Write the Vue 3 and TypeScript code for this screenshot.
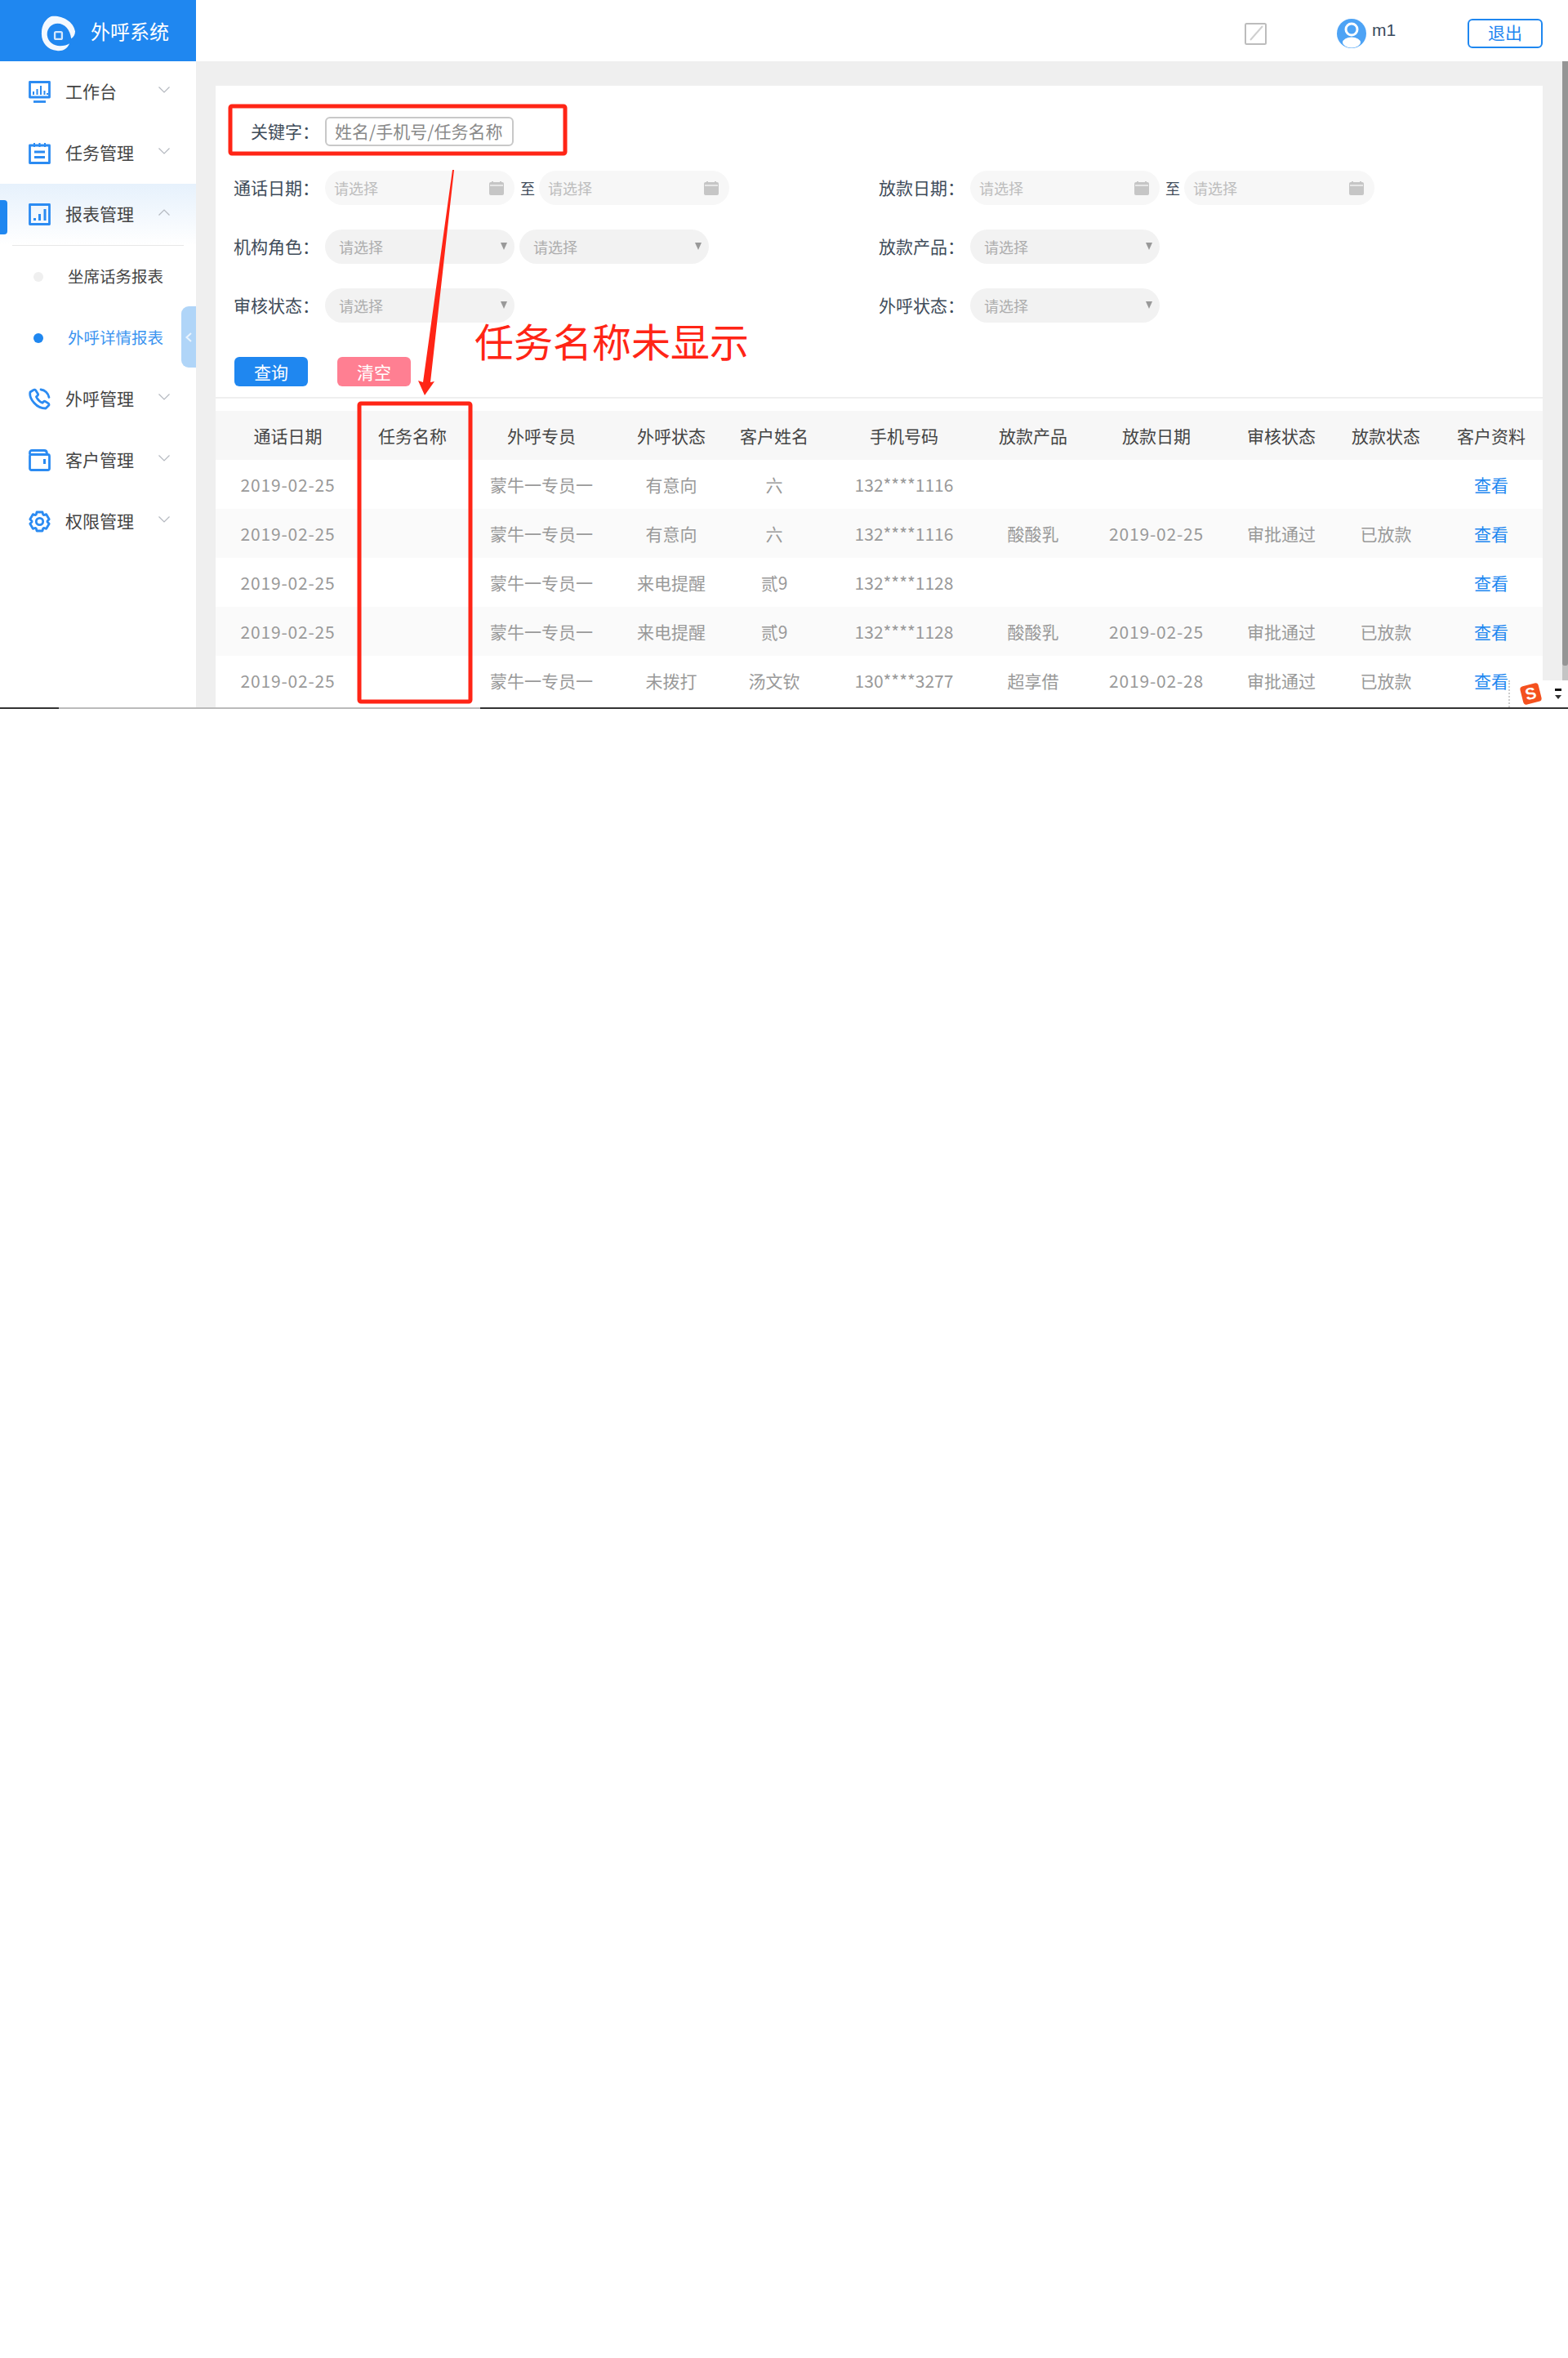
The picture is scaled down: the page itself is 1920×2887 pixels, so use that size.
<template>
  <div class="page">
    <div class="window">
      <aside class="sidebar">
        <div class="brand">
          <svg class="brand-logo" viewBox="0 0 44 46" fill="none">
            <path d="M13 1C24-1 41 6 43 20c0 4-2 7-5 9-1-11-8-19-17-19-8 0-14 7-13 15 1 8 8 13 16 13 5 0 9-1 12-3-3 7-9 10-16 9C8 43 0 33 1 21 1 12 6 4 13 1z" fill="#fff" opacity=".95" />
            <rect x="17.500" y="20.500" width="9" height="9" rx="1.500" stroke="#d5e8fc" stroke-width="2.400" />
          </svg>
          <span>外呼系统</span>
        </div>
        <nav class="menu">
          <template v-for="item in menu" :key="item.name">
            <div class="menu-item" :class="{ active: item.open }">
              <svg class="menu-icon" viewBox="0 0 27 27" fill="none" stroke="#2b8bf2" stroke-width="2.800">
                <template v-if="item.icon === 'desk'">
                  <path d="M1.500 1.500h24v18.500h-24z" stroke-linejoin="round" />
                  <path d="M6 17v-4M10.500 17v-7M15 17V6M19.500 17v-5M23 17v-2" stroke-width="2" />
                  <path d="M6 25.500h15" />
                </template>
                <template v-else-if="item.icon === 'task'">
                  <path d="M1.500 4h24v21.500h-24z" stroke-linejoin="round" />
                  <path d="M7 1v5M13.500 1v5M20 1v5" stroke-width="2" />
                  <path d="M7 12h13M7 18.500h13" stroke-width="2.800" />
                </template>
                <template v-else-if="item.icon === 'report'">
                  <path d="M1.500 1.500h24v24h-24z" stroke-linejoin="round" />
                  <path d="M7.500 21v-3M13.500 21v-8M20 21V7" stroke-width="3" />
                </template>
                <template v-else-if="item.icon === 'phone'">
                  <path d="M6 2.500L2 5c-1 4 1 9 5 13.500S16 25 21 25l3.500-3.500c.8-.8.6-2-.3-2.600l-3.500-2.300c-.8-.5-1.800-.4-2.400.3l-1.300 1.400c-3.500-1.500-6-4.200-7.500-7.500l1.500-1.500c.7-.6.800-1.600.3-2.400L8.800 3c-.6-.9-1.900-1.200-2.800-.5z" stroke-linejoin="round" />
                  <path d="M15 2c5 .5 9 4.500 10 9.500" stroke-linecap="round" />
                </template>
                <template v-else-if="item.icon === 'customer'">
                  <path d="M1.500 6.500V4c0-1.400 1-2.500 2.500-2.500h15c2 0 3.500 1.500 3.500 4v1" />
                  <rect x="1.500" y="6.500" width="24" height="19" rx="2" />
                  <path d="M19.500 12v6" stroke-width="3" />
                </template>
                <template v-else>
                  <path :d="gearPath" stroke-linejoin="round" />
                  <circle cx="13.500" cy="13.500" r="4.200" />
                </template>
              </svg>
              <span class="menu-text">{{ item.name }}</span>
              <svg class="chevron" viewBox="0 0 14 8" fill="none" stroke="#b4b8bf" stroke-width="1.200">
                <path :d="item.open ? 'M0.500 7.500L7 1l6.500 6.500' : 'M0.500 0.500L7 7l6.500-6.500'" />
              </svg>
            </div>
            <div v-if="item.open" class="submenu">
              <div
                v-for="sub in item.children"
                :key="sub.name"
                class="sub-item"
                :class="{ current: sub.current }"
              >
                <i class="dot"></i>
                <span class="menu-text">{{ sub.name }}</span>
              </div>
            </div>
          </template>
        </nav>
        <div class="collapse-handle">
          <svg viewBox="0 0 8 12" fill="none" stroke="#eaf4fe" stroke-width="2"><path d="M7 1L1.500 6 7 11" /></svg>
        </div>
      </aside>

      <div class="main">
        <header class="topbar">
          <svg class="edit-icon" viewBox="0 0 27 27" fill="none" stroke="#bcbcbc">
            <rect x="1" y="1" width="25" height="25" rx="1.500" stroke-width="2" />
            <path d="M7 21L22 4" stroke="#cfcfcf" stroke-width="2" />
          </svg>
          <svg class="avatar" viewBox="0 0 36 36">
            <circle cx="18" cy="18" r="18" fill="#4da3f5" />
            <circle cx="18" cy="13" r="7" fill="none" stroke="#fff" stroke-width="3" />
            <ellipse cx="18" cy="29" rx="11" ry="6.500" fill="#fff" />
          </svg>
          <span class="username">m1</span>
          <button class="logout" type="button">退出</button>
        </header>

        <div class="content">
          <section class="card">
            <div class="filter">
              <div class="filter-keyword">
                <label class="field-label keyword-label">关键字：</label>
                <div class="keyword-input">姓名/手机号/任务名称</div>
              </div>

              <div v-for="row in filterRows" :key="row[0].label" class="filter-row">
                <div v-for="field in row" :key="field.label" class="field">
                  <label class="field-label">{{ field.label }}：</label>
                  <template v-if="field.type === 'date'">
                    <div class="pill date">
                      请选择
                      <svg class="cal" viewBox="0 0 18 17"><path d="M2 1h14a2 2 0 0 1 2 2v12a2 2 0 0 1-2 2H2a2 2 0 0 1-2-2V3a2 2 0 0 1 2-2z" fill="#c6c6c6" /><path d="M1 5h16" stroke="#f2f2f2" stroke-width="1.500" /><path d="M4 0v3M14 0v3" stroke="#c6c6c6" stroke-width="2" /></svg>
                    </div>
                    <span class="to">至</span>
                    <div class="pill date second">
                      请选择
                      <svg class="cal" viewBox="0 0 18 17"><path d="M2 1h14a2 2 0 0 1 2 2v12a2 2 0 0 1-2 2H2a2 2 0 0 1-2-2V3a2 2 0 0 1 2-2z" fill="#c6c6c6" /><path d="M1 5h16" stroke="#f2f2f2" stroke-width="1.500" /><path d="M4 0v3M14 0v3" stroke="#c6c6c6" stroke-width="2" /></svg>
                    </div>
                  </template>
                  <template v-else>
                    <div v-for="n in field.count" :key="n" class="pill select">
                      请选择
                      <i class="caret"></i>
                    </div>
                  </template>
                </div>
              </div>

              <div class="actions">
                <button class="btn primary" type="button">查询</button>
                <button class="btn danger" type="button">清空</button>
              </div>
            </div>

            <table class="grid">
              <colgroup>
                <col v-for="w in colWidths" :key="w.key" :style="{ width: w.width + 'px' }" />
              </colgroup>
              <thead>
                <tr>
                  <th v-for="h in headers" :key="h">{{ h }}</th>
                </tr>
              </thead>
              <tbody>
                <tr v-for="(row, i) in rows" :key="i">
                  <td v-for="(cell, j) in row" :key="j" :class="{ day: /^\d{4}-/.test(cell) }">{{ cell }}</td>
                  <td><a class="link">查看</a></td>
                </tr>
              </tbody>
            </table>
          </section>
        </div>
      </div>

      <div class="scrollbar"><div class="thumb"></div></div>

      <div class="ime">
        <span class="ime-logo">S</span>
        <span class="ime-ctl"><i class="bar"></i><i class="tri"></i></span>
      </div>

      <!-- screenshot markup drawn over the page -->
      <svg class="markup" viewBox="0 0 1920 866">
        <rect x="282" y="130" width="410" height="58" rx="2" fill="none" stroke="#ff2516" stroke-width="5" />
        <rect x="440" y="494" width="136" height="365" rx="2" fill="none" stroke="#ff2516" stroke-width="5" />
        <polygon points="554,208 556,208 527,468 532,467 520,484 512,466 518,468" fill="#ff2516" />
      </svg>
      <div class="note">任务名称未显示</div>
    </div>
    <div class="edge"></div>
  </div>
</template>

<script setup lang="ts">
interface SubItem {
  name: string
  current?: boolean
}

interface MenuItem {
  name: string
  icon: string
  open?: boolean
  children?: SubItem[]
}

interface FilterField {
  label: string
  type: 'date' | 'select'
  count?: number
}

const menu: MenuItem[] = [
  { name: '工作台', icon: 'desk' },
  { name: '任务管理', icon: 'task' },
  {
    name: '报表管理',
    icon: 'report',
    open: true,
    children: [{ name: '坐席话务报表' }, { name: '外呼详情报表', current: true }]
  },
  { name: '外呼管理', icon: 'phone' },
  { name: '客户管理', icon: 'customer' },
  { name: '权限管理', icon: 'gear' }
]

const filterRows: FilterField[][] = [
  [
    { label: '通话日期', type: 'date' },
    { label: '放款日期', type: 'date' }
  ],
  [
    { label: '机构角色', type: 'select', count: 2 },
    { label: '放款产品', type: 'select', count: 1 }
  ],
  [
    { label: '审核状态', type: 'select', count: 1 },
    { label: '外呼状态', type: 'select', count: 1 }
  ]
]

const colWidths = [177, 128, 188, 130, 122, 196, 120, 182, 124, 132, 126].map((width, key) => ({ key, width }))

const headers = [
  '通话日期', '任务名称', '外呼专员', '外呼状态', '客户姓名', '手机号码',
  '放款产品', '放款日期', '审核状态', '放款状态', '客户资料'
]

const rows = [
  ['2019-02-25', '', '蒙牛一专员一', '有意向', '六', '132****1116', '', '', '', ''],
  ['2019-02-25', '', '蒙牛一专员一', '有意向', '六', '132****1116', '酸酸乳', '2019-02-25', '审批通过', '已放款'],
  ['2019-02-25', '', '蒙牛一专员一', '来电提醒', '贰9', '132****1128', '', '', '', ''],
  ['2019-02-25', '', '蒙牛一专员一', '来电提醒', '贰9', '132****1128', '酸酸乳', '2019-02-25', '审批通过', '已放款'],
  ['2019-02-25', '', '蒙牛一专员一', '未拨打', '汤文钦', '130****3277', '超享借', '2019-02-28', '审批通过', '已放款']
]

// six toothed gear for the permissions menu entry
const gearPath = (() => {
  const pt = (deg: number, r: number) => {
    const a = (deg * Math.PI) / 180
    return `${(13.5 + r * Math.cos(a)).toFixed(2)} ${(13.5 + r * Math.sin(a)).toFixed(2)}`
  }
  let d = ''
  for (let i = 0; i < 6; i++) {
    const c = i * 60 - 90
    d += `${i ? 'L' : 'M'}${pt(c - 17, 12)}L${pt(c + 17, 12)}L${pt(c + 27, 9.5)}L${pt(c + 33, 9.5)}`
  }
  return d + 'Z'
})()
</script>

<style>
html,
body {
  margin: 0;
  background: #fff;
}
</style>

<style scoped>
.page {
  width: 1920px;
  height: 2887px;
  background: #fff;
  font-family: "Noto Sans CJK SC", "Liberation Sans", sans-serif;
  font-size: 21px;
  color: #444;
  overflow: hidden;
}

.window {
  position: relative;
  display: grid;
  grid-template-columns: 240px 1fr;
  height: 866px;
  overflow: hidden;
}

.edge {
  height: 2px;
  background: linear-gradient(to right, #333 72px, #bbb 72px, #bbb 588px, #333 588px);
}

/* sidebar */
.sidebar {
  position: relative;
  background: #fff;
}

.brand {
  display: flex;
  align-items: center;
  gap: 18px;
  height: 75px;
  padding-left: 50px;
  background: #1f87f0;
  color: #fff;
  font-size: 24px;
}

.brand-logo {
  width: 43px;
  height: 45px;
  margin-top: 8px;
}

.menu-item {
  position: relative;
  display: flex;
  align-items: center;
  height: 75px;
  padding: 0 32px 0 35px;
}

.menu-icon {
  flex: none;
  width: 27px;
  height: 27px;
  margin-right: 18px;
}

.menu-text {
  margin-top: -3px;
}

.chevron {
  width: 14px;
  height: 8px;
  margin: -6px 0 0 auto;
}

.menu-item.active {
  background: linear-gradient(#e6f1fc, #fff);
}

.menu-item.active::before {
  content: "";
  position: absolute;
  left: 0;
  top: 20px;
  width: 9px;
  height: 42px;
  background: #1f87f0;
  border-radius: 0 4px 4px 0;
}

.submenu {
  margin: 0 15px;
  border-top: 1px solid #e8e8e8;
}

.sub-item {
  display: flex;
  align-items: center;
  height: 75px;
  padding-left: 26px;
  font-size: 19.5px;
}

.dot {
  width: 12px;
  height: 12px;
  margin-right: 30px;
  border-radius: 50%;
  background: #efefef;
}

.sub-item.current {
  color: #3b94f0;
}

.sub-item.current .dot {
  background: #1f87f0;
}

.collapse-handle {
  position: absolute;
  right: 0;
  top: 375px;
  display: flex;
  align-items: center;
  justify-content: center;
  width: 18px;
  height: 75px;
  background: #b0d5f8;
  border-radius: 9px 0 0 9px;
}

.collapse-handle svg {
  width: 8px;
  height: 12px;
}

/* top bar */
.main {
  display: flex;
  flex-direction: column;
  min-width: 0;
}

.topbar {
  flex: none;
  display: flex;
  align-items: center;
  box-sizing: border-box;
  height: 75px;
  padding: 7px 31px 0 0;
  background: #fff;
}

.edit-icon {
  width: 27px;
  height: 27px;
  margin-left: auto;
  margin-right: 86px;
}

.avatar {
  width: 36px;
  height: 36px;
  margin-right: 7px;
}

.username {
  width: 117px;
  margin-top: -8px;
  color: #3a4a5c;
  font-family: "Liberation Sans", sans-serif;
}

.logout {
  width: 92px;
  height: 36px;
  padding: 0 0 3px;
  background: #fff;
  border: 2px solid #1f87f0;
  border-radius: 6px;
  color: #1f87f0;
  font: inherit;
  line-height: 1;
}

/* content */
.content {
  flex: 1;
  padding: 30px 31px 0 24px;
  background: #efefef;
}

.card {
  height: 900px;
  background: #fff;
}

.filter {
  padding-top: 38px;
  padding-bottom: 13px;
  border-bottom: 2px solid #efefef;
}

.filter-keyword {
  display: flex;
  align-items: center;
  height: 36px;
  padding-left: 22px;
}

.field-label {
  flex: none;
  width: 105px;
  margin: -3px 7px 0 0;
  color: #3f4c5a;
  text-align: right;
  white-space: nowrap;
}

.keyword-input {
  width: 231px;
  height: 36px;
  box-sizing: border-box;
  padding-left: 10px;
  border: 2px solid #c8c8c8;
  border-radius: 6px;
  color: #8a8a8a;
  line-height: 30px;
  white-space: nowrap;
  overflow: hidden;
}

.filter-row {
  display: grid;
  grid-template-columns: 790px 1fr;
  margin-top: 30px;
}

.filter-row:last-of-type {
  margin-top: 31px;
}

.field {
  display: flex;
  align-items: center;
  height: 42px;
  padding-left: 22px;
}

.pill {
  display: flex;
  align-items: center;
  justify-content: space-between;
  box-sizing: border-box;
  width: 232px;
  height: 42px;
  border-radius: 21px;
  font-size: 18px;
}

.pill + .pill {
  margin-left: 6px;
}

.date {
  padding: 0 13px 0 11px;
  background: #f7f7f7;
  color: #bdbdbd;
}

.date.second {
  width: 233px;
}

.cal {
  width: 18px;
  height: 17px;
}

.to {
  width: 18px;
  margin: 0 5px 0 7px;
  font-size: 18px;
  color: #3f4c5a;
}

.select {
  padding: 0 9px 0 17px;
  background: #f2f2f2;
  color: #adadad;
}

.caret {
  width: 0;
  height: 0;
  margin-top: -2px;
  border-left: 4.500px solid transparent;
  border-right: 4.500px solid transparent;
  border-top: 9px solid #999;
}

.actions {
  display: flex;
  gap: 36px;
  margin-top: 42px;
  padding-left: 23px;
}

.btn {
  width: 90px;
  height: 36px;
  padding: 0;
  border: 0;
  border-radius: 6px;
  color: #fff;
  font: inherit;
  line-height: 1;
}

.primary {
  background: #1f87f0;
}

.danger {
  background: #ff7f92;
}

/* table */
.grid {
  width: 1625px;
  margin-top: 15px;
  border-collapse: collapse;
  table-layout: fixed;
}

.grid th,
.grid td {
  height: 60px;
  padding: 0;
  text-align: center;
  white-space: nowrap;
}

.grid th {
  background: #f7f7f7;
  color: #444;
  font-weight: 400;
}

.grid td {
  color: #999;
}

.grid td.day {
  letter-spacing: 0.8px;
}

.grid tbody tr:nth-child(even) td {
  background: #fafafa;
}

.link {
  color: #1f87f0;
}

/* browser chrome */
.scrollbar {
  position: absolute;
  right: 0;
  top: 75px;
  width: 7px;
  height: 791px;
  background: #c4c4c4;
}

.thumb {
  height: 740px;
  background: #959595;
  border-radius: 0 0 3px 3px;
}

.ime {
  position: absolute;
  right: 0;
  bottom: 0;
  display: flex;
  align-items: center;
  width: 73px;
  height: 33px;
  background: #fff;
  border-left: 2px dotted #ccc;
  box-sizing: border-box;
}

.ime-logo {
  width: 23px;
  height: 23px;
  margin-left: 14px;
  background: #f4511e;
  border-radius: 4px;
  color: #fff;
  font: 700 20px/23px "Liberation Sans", sans-serif;
  text-align: center;
  transform: rotate(-14deg);
}

.ime-ctl {
  display: flex;
  flex-direction: column;
  align-items: center;
  gap: 5px;
  margin-left: 18px;
}

.bar {
  width: 8px;
  height: 3px;
  background: #111;
}

.tri {
  width: 0;
  height: 0;
  border-left: 4px solid transparent;
  border-right: 4px solid transparent;
  border-top: 5px solid #333;
}

/* markup */
.markup {
  position: absolute;
  left: 0;
  top: 0;
  width: 1920px;
  height: 866px;
  pointer-events: none;
}

.note {
  position: absolute;
  left: 581px;
  top: 381px;
  color: #ff2516;
  font-size: 48px;
  line-height: 70px;
  white-space: nowrap;
}
</style>
